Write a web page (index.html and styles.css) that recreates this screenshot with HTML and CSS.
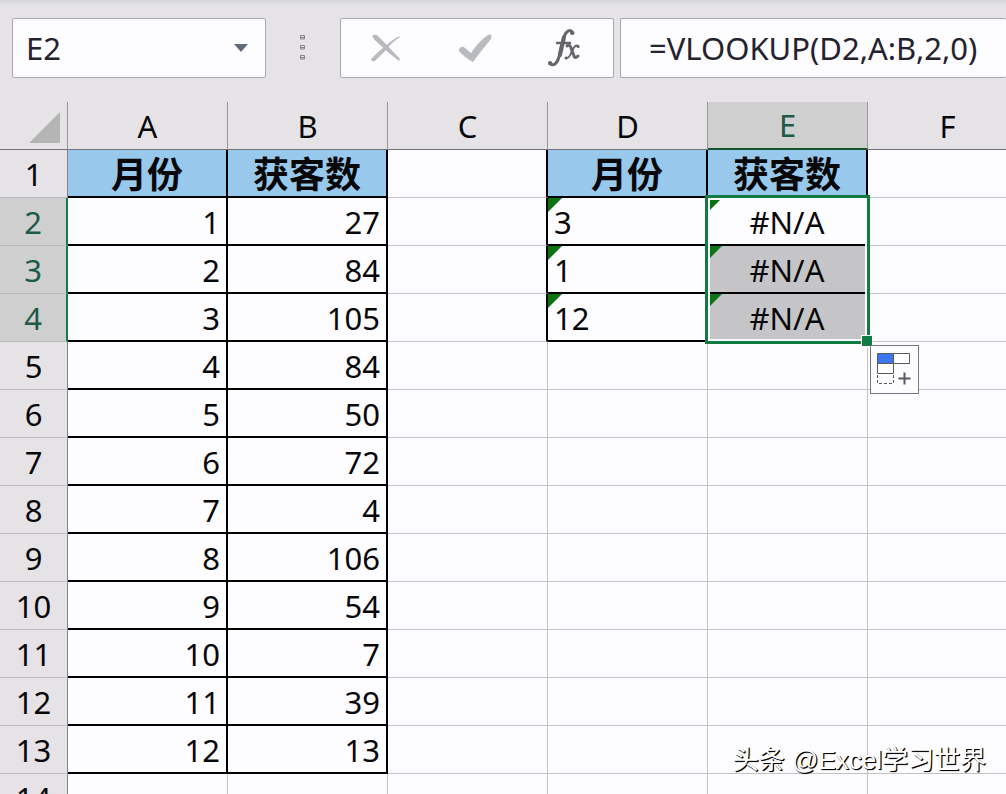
FILE: index.html
```html
<!DOCTYPE html>
<html lang="zh-CN">
<head>
    <meta charset="UTF-8">
    <meta name="viewport" content="width=device-width, initial-scale=1.0">
    <title>Excel VLOOKUP</title>
    <link rel="stylesheet" href="styles.css">
</head>
<body>

<!-- Formula bar -->
<div class="formula-bar">
    <div class="name-box">
        <input class="name-input" type="text" value="E2" aria-label="名称框">
        <button class="name-arrow" aria-label="名称列表">
            <svg width="16" height="10" viewBox="0 0 16 10"><path d="M1 1h14L8 9z" fill="#5f6b78"/></svg>
        </button>
    </div>
    <svg class="grip" width="8" height="28" viewBox="0 0 8 28" fill="none" stroke="#858487" stroke-width="1">
        <path d="M1.5 5V1.5h4V5zM1.5 3.5h4M1.5 15v-3.500h4V15zM1.500 13.500h4M1.500 25v-3.500h4V25zM1.500 23.500h4"/>
    </svg>
    <div class="actions">
        <button aria-label="取消">
            <svg width="32" height="30" viewBox="0 0 32 30" fill="#b9b9be">
                <path d="M2 3Q5 0 8 3Q19 14 30 26L29 28Q17 19 8 10Q4 7 2 3z"/>
                <path d="M29 3L30 4Q21 10 15 18Q9 24 5 28Q1 29 1 26Q8 19 14 14Q22 7 29 3z"/>
            </svg>
        </button>
        <button aria-label="输入">
            <svg width="36" height="30" viewBox="0 0 36 30" fill="#b9bbc0">
                <path d="M2 16Q5 12 8 15L14 20Q22 8 31 2Q36 0 34 6Q24 18 16 29Q8 25 2 18z"/>
            </svg>
        </button>
        <button class="fx" aria-label="插入函数">
            <svg width="34" height="40" viewBox="0 0 34 40" fill="none" stroke="#66656a" stroke-linecap="round">
                <path d="M26 5Q23 0 19 5Q16 9 12 29Q9 39 3 36" stroke-width="3"/>
                <path d="M17 9Q15 18 13 27" stroke-width="4"/>
                <path d="M25 5h.2M3 35h.2" stroke-width="4"/>
                <path d="M10 15h13" stroke-width="2.500"/>
                <path d="M20 18Q23 16 24 20L27 28Q28 31 31 28" stroke-width="3"/>
                <path d="M31 18Q28 16 25 23Q22 31 19 30" stroke-width="2"/>
                <path d="M31 18.500h.2M19 30h.2" stroke-width="3"/>
            </svg>
        </button>
    </div>
    <input class="formula" type="text" value="=VLOOKUP(D2,A:B,2,0)" aria-label="编辑栏">
</div>

<!-- Worksheet -->
<div class="sheet">
    <table class="grid">
        <colgroup>
            <col class="col-num">
            <col><col><col><col><col><col>
        </colgroup>
        <thead>
            <tr>
                <th class="corner">
                    <button aria-label="全选"><svg width="31" height="31" viewBox="0 0 31 31"><path d="M31 0v31H0z" fill="#b5b5b6"/></svg></button>
                </th>
                <th>A</th>
                <th>B</th>
                <th>C</th>
                <th>D</th>
                <th class="active">E</th>
                <th>F</th>
            </tr>
        </thead>
        <tbody>
            <tr>
                <th>1</th>
                <td class="box title">月份</td>
                <td class="box title">获客数</td>
                <td class="edge"></td>
                <td class="box title">月份</td>
                <td class="box title">获客数</td>
                <td></td>
            </tr>
            <tr>
                <th class="active">2</th>
                <td class="box num">1</td>
                <td class="box num">27</td>
                <td class="edge"></td>
                <td class="box text flag">3</td>
                <td class="box error flag">#N/A
                    <div class="selection"><span class="handle"></span>
                        <button class="fill-options" aria-label="自动填充选项">
                            <svg width="36" height="36" viewBox="0 0 36 36" fill="none" stroke="#59595d" stroke-width="1">
                                <path d="M.5 1.500h16v10H.5z" fill="#3b78f0"/>
                                <path d="M16.500 1.500h16v10h-16zM.5 11.500h16v10H.5z" fill="#fff"/>
                                <path d="M.5 23v8.500h16V23" stroke-dasharray="3 2"/>
                                <path d="M27.500 20.500v12M21.500 26.500h12" stroke-width="2"/>
                            </svg>
                        </button>
                    </div>
                </td>
                <td></td>
            </tr>
            <tr>
                <th class="active">3</th>
                <td class="box num">2</td>
                <td class="box num">84</td>
                <td class="edge"></td>
                <td class="box text flag">1</td>
                <td class="box error flag selected">#N/A</td>
                <td></td>
            </tr>
            <tr>
                <th class="active">4</th>
                <td class="box num">3</td>
                <td class="box num">105</td>
                <td class="edge"></td>
                <td class="box text flag">12</td>
                <td class="box error flag selected">#N/A</td>
                <td></td>
            </tr>
            <tr><th>5</th><td class="box num">4</td><td class="box num">84</td><td></td><td></td><td></td><td></td></tr>
            <tr><th>6</th><td class="box num">5</td><td class="box num">50</td><td></td><td></td><td></td><td></td></tr>
            <tr><th>7</th><td class="box num">6</td><td class="box num">72</td><td></td><td></td><td></td><td></td></tr>
            <tr><th>8</th><td class="box num">7</td><td class="box num">4</td><td></td><td></td><td></td><td></td></tr>
            <tr><th>9</th><td class="box num">8</td><td class="box num">106</td><td></td><td></td><td></td><td></td></tr>
            <tr><th>10</th><td class="box num">9</td><td class="box num">54</td><td></td><td></td><td></td><td></td></tr>
            <tr><th>11</th><td class="box num">10</td><td class="box num">7</td><td></td><td></td><td></td><td></td></tr>
            <tr><th>12</th><td class="box num">11</td><td class="box num">39</td><td></td><td></td><td></td><td></td></tr>
            <tr><th>13</th><td class="box num">12</td><td class="box num">13</td><td></td><td></td><td></td><td></td></tr>
            <tr><th>14</th><td></td><td></td><td></td><td></td><td></td><td></td></tr>
        </tbody>
    </table>
</div>

<div class="watermark">头条 @Excel学习世界</div>

</body>
</html>
```
FILE: styles.css
```css
* {
    box-sizing: border-box;
}

body {
    margin: 0;
    height: 100vh;
    display: flex;
    flex-direction: column;
    overflow: hidden;
    position: relative;
    background-color: #e5e3e5;
    color: #08080a;
    font-family: "Noto Sans", "Noto Sans CJK SC", sans-serif;
    font-size: 31px;
}

button {
    display: flex;
    align-items: center;
    justify-content: center;
    padding: 0;
    border: none;
    background: none;
    cursor: pointer;
}

input {
    min-width: 0;
    padding: 0;
    border: none;
    background: none;
    font: inherit;
    color: #24222e;
    outline: none;
}

/* Formula bar */
.formula-bar {
    flex: none;
    display: flex;
    align-items: center;
    height: 102px;
    padding: 18px 0 24px 12px;
    background: linear-gradient(#d5d5d8, #e5e3e5 6px);
}

.name-box, .actions, .formula {
    height: 60px;
    border: 1px solid #a9a9ad;
    border-radius: 2px;
    background-color: #fdfcff;
}

.name-box {
    display: flex;
    width: 254px;
    padding-left: 13px;
}

.name-input {
    flex: 1;
}

.name-arrow {
    width: 48px;
}

.grip {
    margin: 0 33px;
}

.actions {
    display: flex;
    justify-content: space-around;
    width: 274px;
    padding-right: 4px;
}

.actions button {
    flex: 1;
}

.formula {
    flex: 1;
    margin-left: 6px;
    padding-left: 28px;
    border-right: none;
}

/* Worksheet */
.sheet {
    flex: 1;
    min-height: 0;
    overflow: hidden;
}

.grid {
    width: 1028px;
    table-layout: fixed;
    border-collapse: separate;
    border-spacing: 0;
}

.grid col {
    width: 160px;
}

.grid .col-num {
    width: 68px;
}

.grid th, .grid td {
    position: relative;
    height: 48px;
    padding: 2px 6px 0;
    line-height: 40px;
    border-right: 1px solid #c3c2c7;
    border-bottom: 1px solid #c3c2c7;
}

.grid td {
    background-color: #fdfcff;
}

.grid th {
    padding: 0;
    background-color: #e5e3e5;
    font-weight: normal;
    border-right-color: #828286;
    border-bottom-color: #b9b8bc;
}

.grid thead th {
    border-right-color: #98979b;
    border-bottom-color: #737377;
}

.grid th.active {
    background-color: #cfcfd0;
    color: #1c5b46;
}

.grid thead .active {
    border-bottom: 2px solid #10532f;
}

.grid tbody .active {
    border-right: 2px solid #107c41;
}

.corner button {
    margin: 4px 0 0 29px;
}

.grid .box {
    border-right: 2px solid #000;
    border-bottom: 2px solid #000;
}

.grid .edge {
    border-right: 2px solid #000;
}

.grid .title {
    padding: 0 0 2px;
    background-color: #98c9ec;
    font-family: "Noto Sans CJK SC", sans-serif;
    font-size: 36px;
    font-weight: bold;
    text-align: center;
}

.num {
    text-align: right;
}

.text {
    text-align: left;
}

.error {
    text-align: center;
}

.grid .selected {
    background-color: #c5c4c6;
}

/* Green error corner */
.flag::before {
    content: "";
    position: absolute;
    top: 0;
    left: 0;
    border-top: 14px solid #0b7312;
    border-right: 14px solid transparent;
}

.selection {
    position: absolute;
    z-index: 1;
    top: -3px;
    left: -3px;
    width: 165px;
    height: 149px;
    border: 3px solid #107c41;
    box-shadow: inset 0 0 0 2px #fdfcff;
}

.handle {
    position: absolute;
    right: -6px;
    bottom: -6px;
    width: 12px;
    height: 12px;
    border: 1px solid #fff;
    background-color: #107c41;
}

.fill-options {
    position: absolute;
    top: 147px;
    left: 162px;
    width: 49px;
    height: 49px;
    border: 1px solid #77767b;
    background-color: #fdfcff;
}

.watermark {
    position: absolute;
    right: 20px;
    bottom: 14px;
    color: #fff;
    font-family: "Liberation Sans", "Noto Sans CJK SC", sans-serif;
    font-size: 26px;
    line-height: 40px;
    text-shadow: 1px 1px 0 #000, 1px 1px 1px #000;
}
```
